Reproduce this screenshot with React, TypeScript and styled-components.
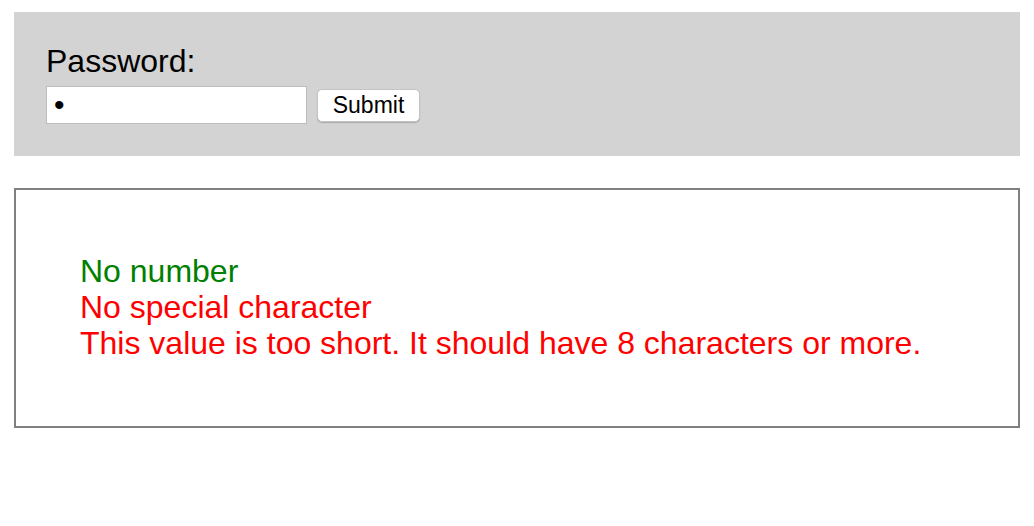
import React from 'react';
import styled, { createGlobalStyle } from 'styled-components';

const GlobalStyle = createGlobalStyle`
  body {
    margin: 0;
    background: #ffffff;
    font-family: 'Liberation Sans', Arial, sans-serif;
  }
`;

const Page = styled.div`
  padding: 12px 14px;
  display: flex;
  flex-direction: column;
  gap: 32px;
`;

const FormPanel = styled.form`
  background: #d3d3d3;
  padding: 31px 32px 32px;
  display: flex;
  flex-direction: column;
  gap: 6px;
`;

const Label = styled.label`
  font-size: 32px;
  color: #000000;
`;

const Row = styled.div`
  display: flex;
  align-items: center;
  gap: 10px;
`;

const PasswordInput = styled.input`
  box-sizing: border-box;
  width: 261px;
  height: 38px;
  margin: 0;
  padding: 0 7px;
  border: 1px solid #bdbdbd;
  box-shadow: inset 0 0 0 1px #ffffff;
  background: #ffffff;
  font-family: 'Liberation Sans', Arial, sans-serif;
  font-size: 30px;
  color: #000000;
  outline: none;
`;

const SubmitButton = styled.button`
  box-sizing: border-box;
  width: 103px;
  height: 33px;
  margin: 0;
  padding: 0;
  border: 1px solid #c4c4c4;
  border-radius: 5px;
  background: #ffffff;
  box-shadow: 0 1px 1px rgba(0, 0, 0, 0.2);
  font-family: 'Liberation Sans', Arial, sans-serif;
  font-size: 23px;
  color: #000000;
`;

const ResultBox = styled.div`
  border: 2px solid #808080;
  padding: 63px 62px 65px 64px;
`;

const Message = styled.div<{ $ok: boolean }>`
  font-size: 32px;
  line-height: 36px;
  color: ${(p) => (p.$ok ? '#008000' : '#ff0000')};
`;

const messages = [
  { text: 'No number', ok: true },
  { text: 'No special character', ok: false },
  { text: 'This value is too short. It should have 8 characters or more.', ok: false },
];

export default function App() {
  return (
    <>
      <GlobalStyle />
      <Page>
        <FormPanel onSubmit={(e) => e.preventDefault()}>
          <Label htmlFor="pw">Password:</Label>
          <Row>
            <PasswordInput id="pw" type="password" defaultValue="a" />
            <SubmitButton type="submit">Submit</SubmitButton>
          </Row>
        </FormPanel>
        <ResultBox>
          {messages.map((m, i) => (
            <Message key={i} $ok={m.ok}>
              {m.text}
            </Message>
          ))}
        </ResultBox>
      </Page>
    </>
  );
}
